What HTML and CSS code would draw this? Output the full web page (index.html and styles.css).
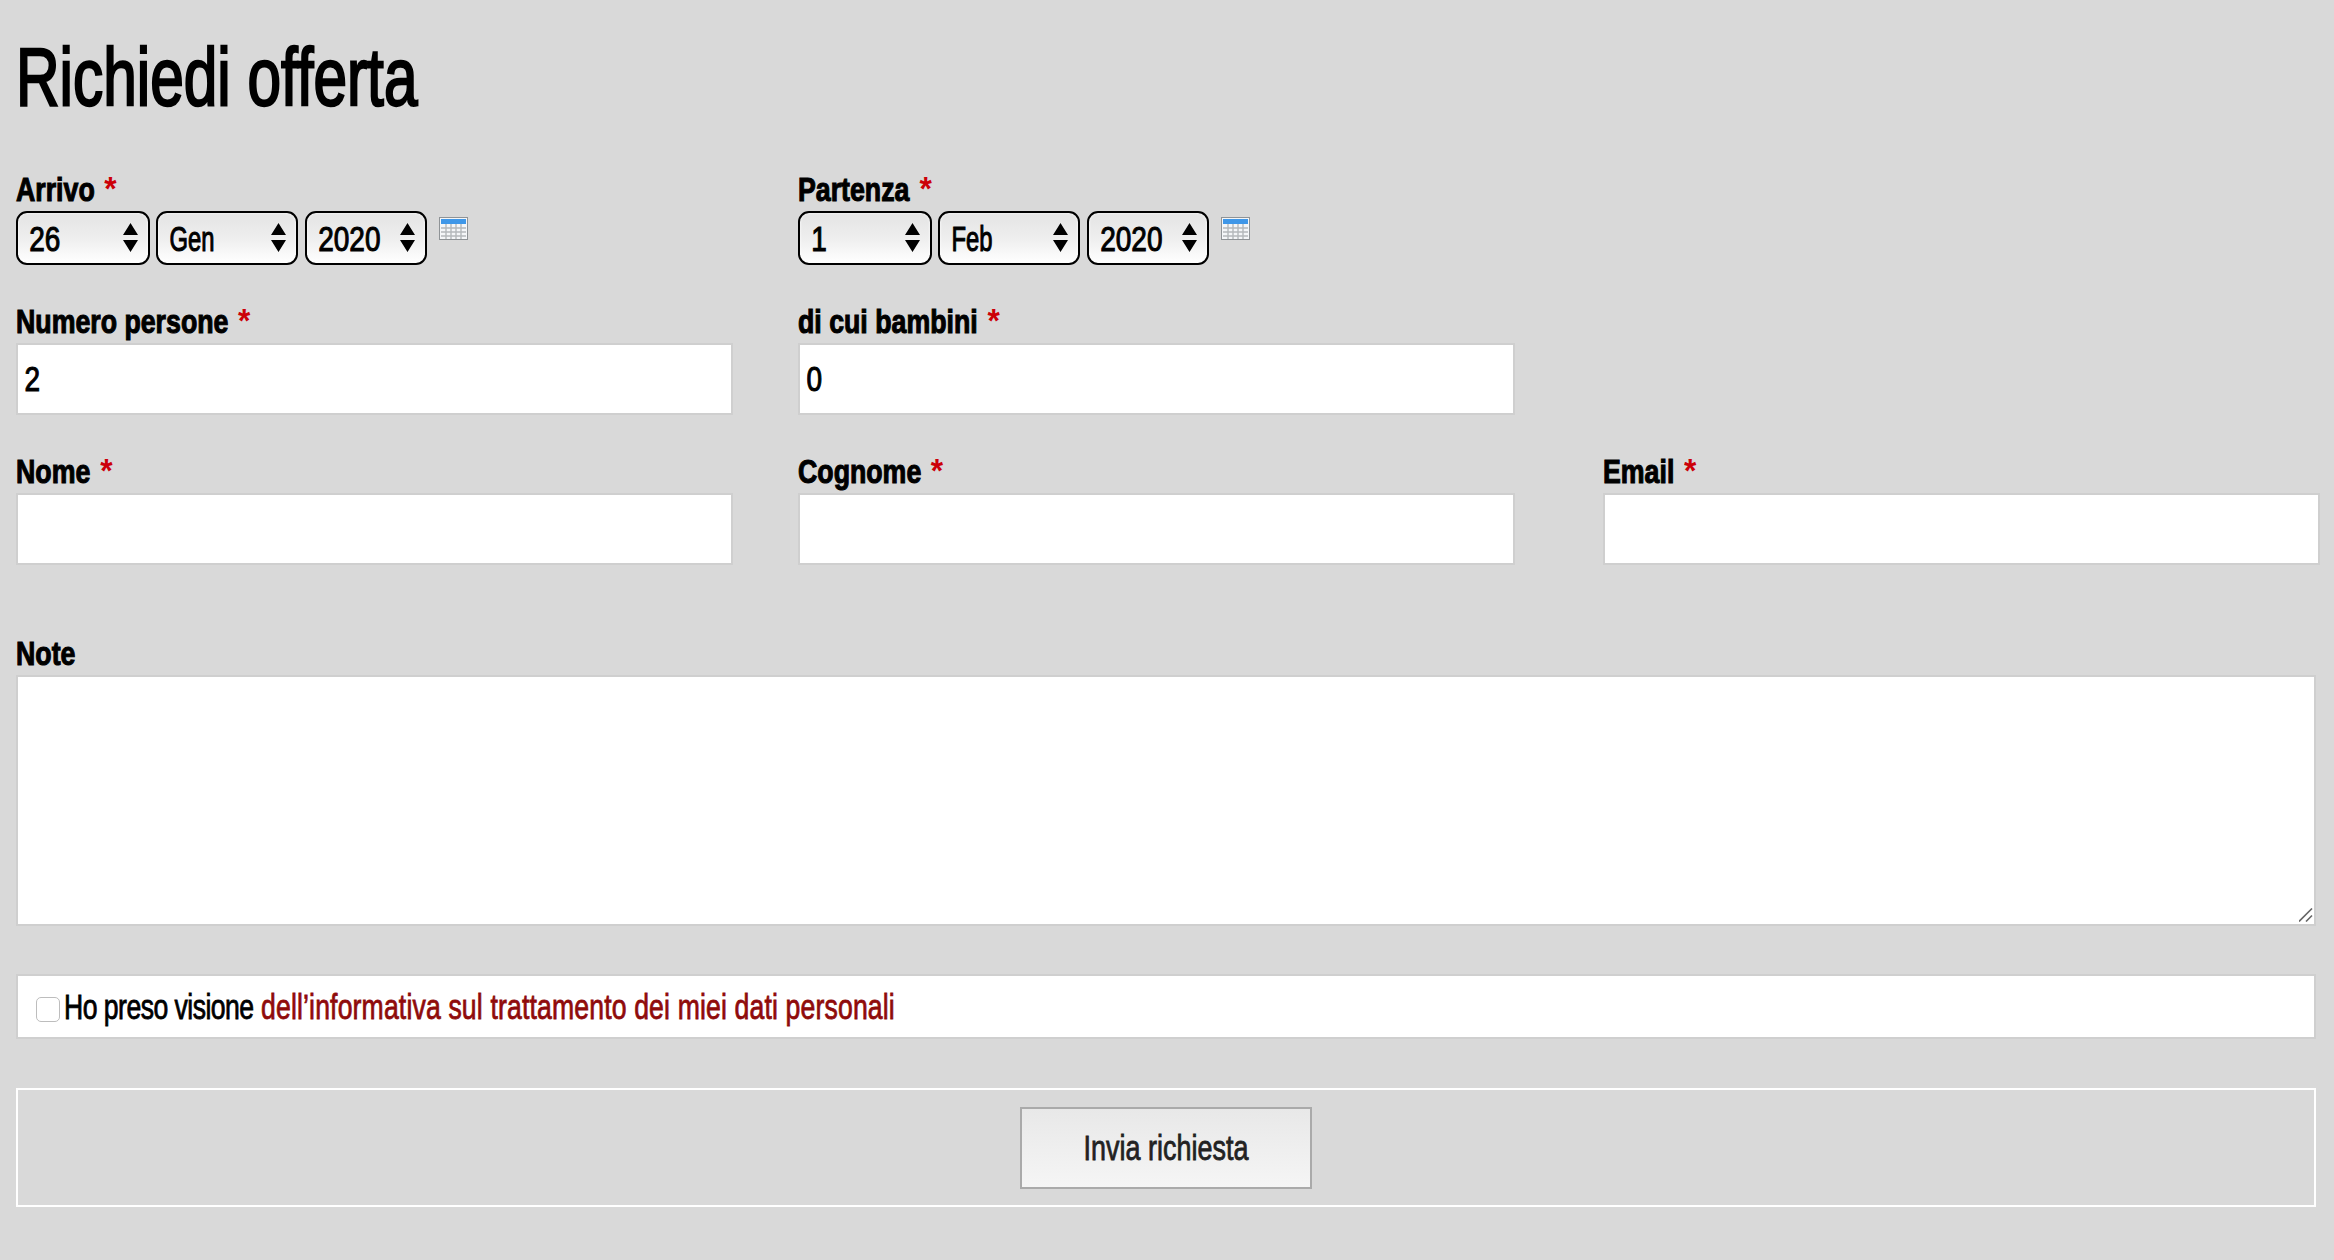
FILE: index.html
```html
<!DOCTYPE html>
<html lang="it">
<head>
<meta charset="utf-8">
<title>Richiedi offerta</title>
<link rel="stylesheet" href="styles.css">
</head>
<body>
<main class="page">
  <h1 class="title">Richiedi offerta</h1>
  <form class="form">
    <div class="grid">
      <div class="field">
        <label class="label">Arrivo <b class="req">*</b></label>
        <div class="dates">
          <span class="sel w-day"><select class="val"><option>26</option></select><svg class="arrows" viewBox="0 0 15 29"><path d="M7.5 0L15 12H0zM0 17h15L7.5 29z"/></svg></span>
          <span class="sel w-mon"><select class="val val-mon"><option>Gen</option></select><svg class="arrows" viewBox="0 0 15 29"><path d="M7.5 0L15 12H0zM0 17h15L7.5 29z"/></svg></span>
          <span class="sel w-year"><select class="val"><option>2020</option></select><svg class="arrows" viewBox="0 0 15 29"><path d="M7.5 0L15 12H0zM0 17h15L7.5 29z"/></svg></span>
          <svg class="cal" viewBox="0 0 29 23"><rect x=".5" y=".5" width="28" height="22" fill="#f4f6f8" stroke="#8f9396"/><rect x="2" y="2" width="25" height="5" fill="#3f97e8"/><path d="M2 11h25M2 15h25M2 19h25M7 7v15M12 7v15M17 7v15M22 7v15" stroke="#b4b8bb" stroke-width="1.4"/></svg>
        </div>
      </div>
      <div class="field">
        <label class="label">Partenza <b class="req">*</b></label>
        <div class="dates">
          <span class="sel w-day"><select class="val"><option>1</option></select><svg class="arrows" viewBox="0 0 15 29"><path d="M7.5 0L15 12H0zM0 17h15L7.5 29z"/></svg></span>
          <span class="sel w-mon"><select class="val val-mon"><option>Feb</option></select><svg class="arrows" viewBox="0 0 15 29"><path d="M7.5 0L15 12H0zM0 17h15L7.5 29z"/></svg></span>
          <span class="sel w-year"><select class="val"><option>2020</option></select><svg class="arrows" viewBox="0 0 15 29"><path d="M7.5 0L15 12H0zM0 17h15L7.5 29z"/></svg></span>
          <svg class="cal" viewBox="0 0 29 23"><rect x=".5" y=".5" width="28" height="22" fill="#f4f6f8" stroke="#8f9396"/><rect x="2" y="2" width="25" height="5" fill="#3f97e8"/><path d="M2 11h25M2 15h25M2 19h25M7 7v15M12 7v15M17 7v15M22 7v15" stroke="#b4b8bb" stroke-width="1.4"/></svg>
        </div>
      </div>
    </div>
    <div class="grid row-people">
      <div class="field"><label class="label">Numero persone <b class="req">*</b></label><span class="input"><input class="val" value="2"></span></div>
      <div class="field"><label class="label">di cui bambini <b class="req">*</b></label><span class="input"><input class="val" value="0"></span></div>
    </div>
    <div class="grid row-name">
      <div class="field"><label class="label">Nome <b class="req">*</b></label><span class="input"><input class="val"></span></div>
      <div class="field"><label class="label">Cognome <b class="req">*</b></label><span class="input"><input class="val"></span></div>
      <div class="field"><label class="label">Email <b class="req">*</b></label><span class="input"><input class="val"></span></div>
    </div>
    <div class="field row-note">
      <label class="label">Note</label>
      <div class="note-box">
        <textarea class="note"></textarea>
        <svg class="grip" viewBox="0 0 14 14"><path d="M0 13.5L13 .5M7 13.5L13 7.5" stroke="#666" stroke-width="1.6"/></svg>
      </div>
    </div>
    <div class="privacy"><input type="checkbox" class="check"><span class="privacy-text"><span class="lead">Ho preso visione</span> <a class="link">dell’informativa sul trattamento dei miei dati personali</a></span></div>
    <div class="actions"><button type="button" class="submit"><span class="submit-text">Invia richiesta</span></button></div>
  </form>
</main>
</body>
</html>
```
FILE: styles.css
```css
* { box-sizing: border-box; }
html, body { margin: 0; height: 100%; }
body {
  background: #d9d9d9;
  color: #000;
  font-family: "Liberation Sans", Arial, sans-serif;
  overflow: hidden;
}
.page { padding: 0 16px; }
.title {
  margin: 0;
  height: 164px;
  padding-top: 30px;
  font-size: 82px;
  line-height: 94px;
  font-weight: 400;
  white-space: nowrap;
  transform: scaleX(.736);
  transform-origin: 0 0;
  -webkit-text-stroke: 2.4px #000;
}
.grid { display: grid; grid-template-columns: 782px 805px 716px; }
.field { display: flex; flex-direction: column; }
.label {
  height: 47px;
  padding-top: 7px;
  font-size: 33px;
  line-height: 38px;
  font-weight: 700;
  white-space: nowrap;
  transform: scaleX(.81);
  transform-origin: 0 0;
  -webkit-text-stroke: 1.1px #000;
}
.req {
  display: inline-block;
  color: #cc0008;
  font-size: 34px;
  line-height: 30px;
  margin-left: 4px;
  vertical-align: 1px;
  -webkit-text-stroke: 0;
  transform: scaleX(1.15);
}
.dates { display: flex; align-items: flex-start; gap: 7px; height: 54px; }
.sel {
  position: relative;
  display: block;
  height: 54px;
  border: 2px solid #000;
  border-radius: 11px;
  background: linear-gradient(#e4e4e4, #eeeeee 50%, #ffffff);
  box-shadow: inset 0 0 3px #fff;
  overflow: hidden;
}
.w-day { width: 134px; }
.w-mon { width: 142px; margin-left: -1px; }
.w-year { width: 122px; }
.val {
  display: block;
  height: 100%;
  margin: 0;
  border: 0;
  outline: none;
  background: transparent;
  color: #000;
  font: 400 35px/1 "Liberation Sans", Arial, sans-serif;
  -webkit-text-stroke: 1.1px #000;
  width: 125%;
  transform: scaleX(.8);
  transform-origin: 0 0;
}
select.val { appearance: none; padding: 0 0 0 14px; }
select.val-mon { width: 147%; transform: scaleX(.68); padding-left: 17px; }
.arrows { position: absolute; right: 10px; top: 10px; width: 15px; height: 29px; pointer-events: none; }
.cal { width: 29px; height: 23px; margin: 6px 0 0 5px; }
.row-people { margin-top: 31px; }
.row-name { margin-top: 31px; }
.input {
  display: block;
  width: 717px;
  height: 72px;
  border: 2px solid #cfcfcf;
  background: #fff;
  overflow: hidden;
}
input.val { padding: 0 0 0 8px; }
.row-note { margin-top: 63px; }
.note-box { position: relative; width: 2300px; height: 251px; }
.note {
  display: block;
  width: 100%;
  height: 100%;
  border: 2px solid #cfcfcf;
  background: #fff;
  resize: none;
  outline: none;
}
.grip { position: absolute; right: 3px; bottom: 4px; width: 14px; height: 14px; pointer-events: none; }
.privacy {
  display: flex;
  align-items: center;
  width: 2300px;
  height: 65px;
  margin-top: 48px;
  padding-left: 18px;
  border: 2px solid #cfcfcf;
  background: #fff;
  overflow: hidden;
}
.privacy-text {
  font-size: 35px;
  white-space: nowrap;
  transform: scaleX(.76);
  transform-origin: 0 50%;
  -webkit-text-stroke: .8px currentColor;
}
.lead { letter-spacing: -.7px; }
.check {
  appearance: none;
  flex: none;
  width: 24px;
  height: 25px;
  margin: 6px 4px 0 0;
  border: 1px solid #bdbdbd;
  border-radius: 5px;
  background: #fff;
}
.link { color: #8f0b0b; letter-spacing: .2px; }
.actions {
  display: flex;
  justify-content: center;
  align-items: center;
  width: 2300px;
  height: 119px;
  margin-top: 49px;
  border: 2px solid #fff;
}
.submit {
  width: 292px;
  height: 82px;
  padding: 0;
  border: 2px solid #aaa;
  background: linear-gradient(#e8e8e8, #f5f5f5);
  color: #222;
  font: 400 35px/1 "Liberation Sans", Arial, sans-serif;
}
.submit-text {
  display: block;
  white-space: nowrap;
  transform: scaleX(.77);
  -webkit-text-stroke: .8px #222;
}
```
